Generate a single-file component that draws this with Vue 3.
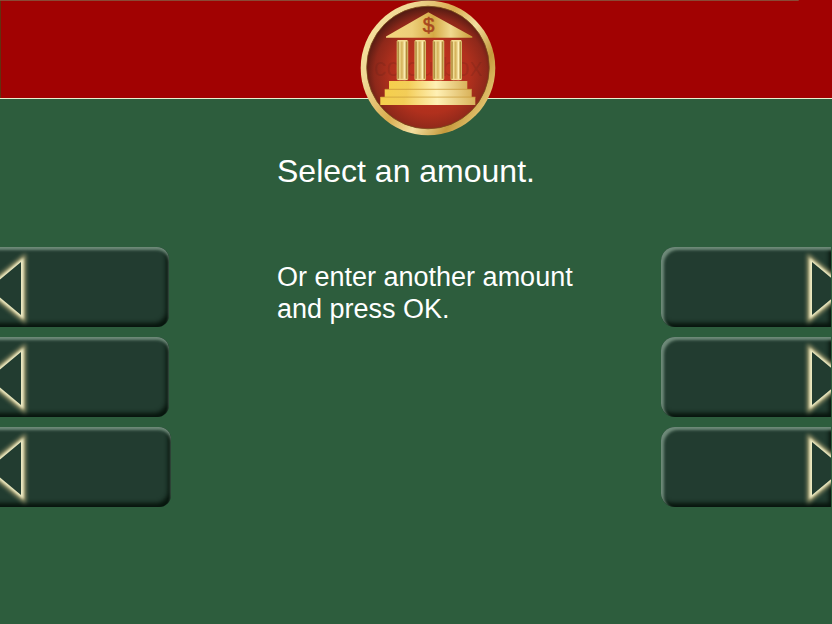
<script setup>
const leftOptions = [
  { id: 1, wide: false },
  { id: 2, wide: false },
  { id: 3, wide: true }
]
const rightOptions = [{ id: 4 }, { id: 5 }, { id: 6 }]
const columns = [36.7, 54.5, 72.7, 90.5]
</script>

<template>
  <div class="screen">
    <header class="banner">
      <svg class="logo" viewBox="0 0 136 136" role="img" aria-label="Bank">
        <defs>
          <linearGradient id="rim" x1="0" y1="0.2" x2="1" y2="0.8">
            <stop offset="0" stop-color="#f6e3a0" />
            <stop offset="0.2" stop-color="#f0d794" />
            <stop offset="0.45" stop-color="#d9ad50" />
            <stop offset="0.62" stop-color="#f3dfa0" />
            <stop offset="0.8" stop-color="#c59a3c" />
            <stop offset="1" stop-color="#f0d585" />
          </linearGradient>
          <radialGradient id="face" cx="0.52" cy="0.55" r="0.54">
            <stop offset="0" stop-color="#c8331f" />
            <stop offset="0.6" stop-color="#b0301d" />
            <stop offset="0.85" stop-color="#8e281a" />
            <stop offset="1" stop-color="#571c13" />
          </radialGradient>
          <linearGradient id="roof">
            <stop offset="0" stop-color="#f3d77f" />
            <stop offset="0.3" stop-color="#edcf7a" />
            <stop offset="0.55" stop-color="#d5a944" />
            <stop offset="0.75" stop-color="#f0d98f" />
            <stop offset="1" stop-color="#c99c38" />
          </linearGradient>
          <linearGradient id="pillar">
            <stop offset="0" stop-color="#e3c673" />
            <stop offset="0.14" stop-color="#a98435" />
            <stop offset="0.26" stop-color="#f0dc92" />
            <stop offset="0.45" stop-color="#d3b058" />
            <stop offset="0.7" stop-color="#fff1b8" />
            <stop offset="0.86" stop-color="#ae8634" />
            <stop offset="1" stop-color="#ead083" />
          </linearGradient>
          <linearGradient id="steps">
            <stop offset="0" stop-color="#f5cf4c" />
            <stop offset="0.25" stop-color="#f3cd58" />
            <stop offset="0.6" stop-color="#fff0b4" />
            <stop offset="1" stop-color="#d9b25a" />
          </linearGradient>
        </defs>
        <circle cx="68" cy="68" r="67.3" fill="url(#rim)" />
        <circle cx="68" cy="67.5" r="61.3" fill="url(#face)" stroke="#7a4a1a" stroke-width="0.8" />
        <text class="mark" x="68" y="76" text-anchor="middle">colourbox</text>
        <path d="M68.3 12.3 L112.3 36.5 V37.7 H26 V36.5 Z" fill="url(#roof)" />
        <text class="dollar" x="68.7" y="31.8" text-anchor="middle">$</text>
        <g v-for="x in columns" :key="x">
          <rect :x="x" y="40" width="11.5" height="40.3" rx="1.5" fill="url(#pillar)" />
          <path :d="`M${x + 1} 40.8h9.5M${x + 1} 79.4h9.5`" stroke="#f3dc92" stroke-width="1.4" />
        </g>
        <g fill="url(#steps)">
          <rect x="29" y="81" width="78.3" height="8.6" />
          <rect x="24.7" y="89.2" width="87" height="8.2" />
          <rect x="20.3" y="97" width="95" height="8" />
        </g>
        <path d="M25 89.3h87M20.5 97.1h95" stroke="#c99a35" stroke-width="0.7" />
      </svg>
    </header>

    <main class="content">
      <nav class="options" aria-label="Left amounts">
        <button
          v-for="o in leftOptions"
          :key="o.id"
          type="button"
          class="option left"
          :class="{ wide: o.wide }"
          :aria-label="`Amount ${o.id}`"
        >
          <svg class="arrow" viewBox="0 0 32 80" aria-hidden="true">
            <path class="glow" d="M21.5 15 L-11 41.5 L21.5 68 Z" />
            <path class="edge" d="M21.5 15 L-11 41.5 L21.5 68 Z" />
            <path class="face" d="M21 15 L-11 41.5 L21 68 Z" />
          </svg>
        </button>
      </nav>

      <section class="message">
        <h1>Select an amount.</h1>
        <p>Or enter another amount<br />and press OK.</p>
      </section>

      <nav class="options" aria-label="Right amounts">
        <button
          v-for="o in rightOptions"
          :key="o.id"
          type="button"
          class="option right"
          :aria-label="`Amount ${o.id}`"
        >
          <svg class="arrow" viewBox="0 0 32 80" aria-hidden="true">
            <path class="glow" d="M12.5 15 L45 41.5 L12.5 68 Z" />
            <path class="edge" d="M12.5 15 L45 41.5 L12.5 68 Z" />
            <path class="face" d="M13 15 L45 41.5 L13 68 Z" />
          </svg>
        </button>
      </nav>
    </main>
  </div>
</template>

<style>
body {
  margin: 0;
  background: #2d5d3d;
}
</style>

<style scoped>
.screen {
  min-height: 100vh;
  overflow-x: hidden;
  background: #2d5d3d;
  color: #fff;
  font-family: "Liberation Sans", Arial, sans-serif;
}

.banner {
  position: relative;
  box-sizing: border-box;
  height: 99px;
  border-bottom: 1px solid #e9f0cf;
  background:
    linear-gradient(#8a4a36, #8a4a36) 0 0 / 96% 1px no-repeat,
    linear-gradient(#63300f, #63300f) 0 0 / 1px 100% no-repeat,
    #a10202;
}

.logo {
  position: absolute;
  top: 0;
  left: calc(50% - 56px);
  width: 136px;
  height: 136px;
}

.dollar {
  fill: #a8471f;
  stroke: #a8471f;
  stroke-width: 0.5;
  font-size: 21px;
}

.mark {
  fill: #4a1a14;
  fill-opacity: 0.16;
  font-size: 25px;
}

.content {
  display: grid;
  grid-template-columns: 171px 1fr 171px;
}

.options {
  display: flex;
  flex-direction: column;
  gap: 10px;
  padding-top: 148px;
}

.option {
  display: flex;
  box-sizing: border-box;
  height: 80px;
  padding: 0;
  border: 0;
  overflow: hidden;
  background: #223c30;
  cursor: pointer;
}

.left {
  width: 177px;
  margin-left: -8px;
  padding-left: 8px;
  border-radius: 0 12px 12px 0;
  box-shadow:
    inset 0 3px 3px #6f8b7a,
    inset -3px -4px 4px #07150d;
}

.wide {
  width: 179px;
}

.right {
  justify-content: flex-end;
  width: 170px;
  border-radius: 14px 0 0 14px;
  box-shadow:
    inset 3px 3px 3px #6f8b7a,
    inset -2px -4px 4px #07150d;
}

.arrow {
  width: 32px;
  height: 80px;
}

.glow {
  fill: none;
  stroke: #b5ac7c;
  stroke-width: 8;
  filter: blur(2px);
}

.edge {
  fill: none;
  stroke: #f0eec6;
  stroke-width: 4;
  filter: blur(1px);
}

.face {
  fill: #223c30;
}

.message {
  padding: 52px 20px 0 106px;
}

h1 {
  margin: 0 0 70px;
  font-size: 32px;
  font-weight: normal;
  line-height: 40px;
  white-space: nowrap;
}

p {
  margin: 0;
  font-size: 27px;
  line-height: 32px;
  white-space: nowrap;
}
</style>
